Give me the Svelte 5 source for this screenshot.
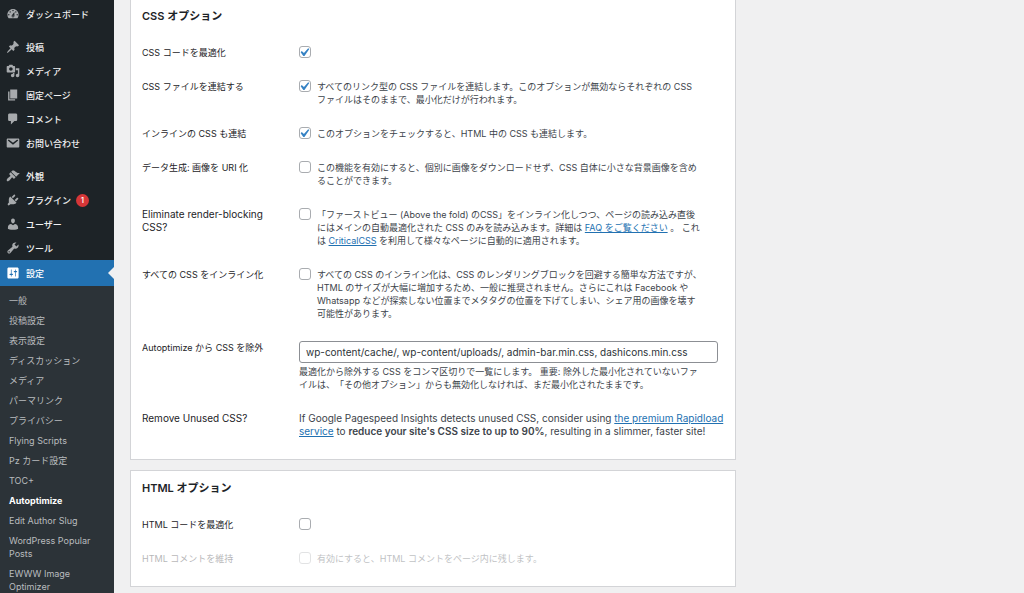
<script>
  const menuGroups = [
    [{ label: 'ダッシュボード', icon: 'dashboard' }],
    [
      { label: '投稿', icon: 'post' },
      { label: 'メディア', icon: 'media' },
      { label: '固定ページ', icon: 'page' },
      { label: 'コメント', icon: 'comment' },
      { label: 'お問い合わせ', icon: 'mail' }
    ],
    [
      { label: '外観', icon: 'appearance' },
      { label: 'プラグイン', icon: 'plugin', count: 1 },
      { label: 'ユーザー', icon: 'user' },
      { label: 'ツール', icon: 'tool' },
      { label: '設定', icon: 'settings', current: true }
    ]
  ];

  const submenu = [
    '一般',
    '投稿設定',
    '表示設定',
    'ディスカッション',
    'メディア',
    'パーマリンク',
    'プライバシー',
    'Flying Scripts',
    'Pz カード設定',
    'TOC+',
    'Autoptimize',
    'Edit Author Slug',
    'WordPress Popular Posts',
    'EWWW Image Optimizer'
  ];

  // 20x20 icon shapes
  const icons = {
    dashboard:
      'M3.76 16h12.48c1.1-1.37 1.76-3.11 1.76-5 0-4.42-3.58-8-8-8s-8 3.58-8 8c0 1.89.66 3.63 1.76 5zM10 4c.55 0 1 .45 1 1s-.45 1-1 1-1-.45-1-1 .45-1 1-1zM6 6c.55 0 1 .45 1 1s-.45 1-1 1-1-.45-1-1 .45-1 1-1zm8 0c.55 0 1 .45 1 1s-.45 1-1 1-1-.45-1-1 .45-1 1-1zm-5.37 5.55L12 7v6c0 1.1-.9 2-2 2s-2-.9-2-2c0-.57.24-1.08.63-1.45zM4 10c.55 0 1 .45 1 1s-.45 1-1 1-1-.45-1-1 .45-1 1-1zm12 0c.55 0 1 .45 1 1s-.45 1-1 1-1-.45-1-1 .45-1 1-1zm-5 3c0-.55-.45-1-1-1s-1 .45-1 1 .45 1 1 1 1-.45 1-1z',
    post: 'M10.44 3.02l1.82-1.82 6.36 6.35-1.83 1.82c-1.05-.68-2.48-.57-3.41.36l-.75.75c-.92.93-1.04 2.35-.35 3.41l-1.83 1.82-2.41-2.41-2.8 2.79c-.42.42-3.38 2.71-3.8 2.29s1.86-3.39 2.28-3.81l2.79-2.79L4.1 9.36l1.83-1.82c1.05.69 2.48.57 3.4-.36l.75-.75c.93-.92 1.05-2.35.36-3.41z',
    media:
      'M13 11V4c0-.55-.45-1-1-1h-1.67L9 1H5L3.67 3H2c-.55 0-1 .45-1 1v7c0 .55.45 1 1 1h10c.55 0 1-.45 1-1zM7 4.5c1.38 0 2.5 1.12 2.5 2.5S8.38 9.5 7 9.5 4.5 8.38 4.5 7 5.62 4.5 7 4.5zM14 6h5v10.5c0 1.38-1.12 2.5-2.5 2.5S14 17.88 14 16.5s1.12-2.5 2.5-2.5c.17 0 .34.02.5.05V9h-3V6zm-4 8.05V13h2v3.5c0 1.38-1.12 2.5-2.5 2.5S7 17.88 7 16.5 8.12 14 9.5 14c.17 0 .34.02.5.05z',
    page: 'M6 15V2h10v13H6zm-1 1h8v2H3V5h2v11z',
    comment:
      'M5 2h9c1.1 0 2 .9 2 2v7c0 1.1-.9 2-2 2h-2l-5 5v-5H5c-1.1 0-2-.9-2-2V4c0-1.1.9-2 2-2z',
    mail: 'M2.5 3.5h15c.8 0 1.5.7 1.5 1.5v10c0 .8-.7 1.5-1.5 1.5h-15c-.8 0-1.5-.7-1.5-1.5V5c0-.8.7-1.5 1.5-1.5zM2.6 6.3l7.4 6.2 7.4-6.2-1.3-1.4L10 9.6 3.9 4.9z',
    appearance:
      'M14.48 11.06L7.41 3.99l1.5-1.5c.5-.56 2.3-.47 3.51.32 1.21.8 1.43 1.28 2.91 2.1 1.18.64 2.45 1.26 4.45.85zm-.71.71L6.7 4.7 4.93 6.47c-.39.39-.39 1.02 0 1.41l1.06 1.06c.39.39.39 1.03 0 1.42-.6.6-1.43 1.11-2.21 1.69-.35.26-.7.53-1.01.84C1.43 14.23.4 16.08 1.4 17.07c.99 1 2.84-.03 4.18-1.36.31-.31.58-.66.85-1.02.57-.78 1.08-1.61 1.69-2.21.39-.39 1.02-.39 1.41 0l1.06 1.06c.39.39 1.02.39 1.41 0z',
    plugin:
      'M13.11 4.36L9.87 7.6 8 5.73l3.24-3.24c.35-.34 1.05-.2 1.56.32.52.51.66 1.21.31 1.55zm-8 1.77l.91-1.12 9.01 9.01-1.19.84c-.71.71-2.63 1.16-3.82 1.16H6.14L4.9 17.26c-.59.59-1.54.59-2.12 0-.59-.58-.59-1.53 0-2.12l1.24-1.24v-3.88c0-1.13.4-3.19 1.09-3.89zm7.26 3.97l3.24-3.24c.34-.35 1.04-.21 1.55.31.52.51.66 1.21.31 1.55l-3.24 3.25z',
    user: 'M10 9.25c-2.27 0-2.73-3.44-2.73-3.44C7 4.02 7.82 2 9.97 2c2.16 0 2.98 2.02 2.71 3.81 0 0-.41 3.44-2.68 3.44zm0 2.57L12.72 10c2.39 0 4.52 2.33 4.52 4.53v2.49s-3.65 1.13-7.24 1.13c-3.65 0-7.24-1.13-7.24-1.13v-2.49c0-2.25 1.94-4.48 4.47-4.48z',
    tool: 'M16.68 9.77c-1.34 1.34-3.3 1.67-4.95.99l-5.41 6.52c-.99.99-2.59.99-3.58 0s-.99-2.59 0-3.57l6.52-5.42c-.68-1.65-.35-3.61.99-4.95 1.28-1.28 3.12-1.62 4.72-1.06l-2.89 2.89 2.82 2.82 2.86-2.87c.53 1.58.18 3.39-1.08 4.65zM3.81 16.21c.4.39 1.04.39 1.43 0 .4-.4.4-1.04 0-1.43-.39-.4-1.03-.4-1.43 0-.39.39-.39 1.03 0 1.43z',
    settings:
      'M18 16V4c0-1.1-.9-2-2-2H4c-1.1 0-2 .9-2 2v12c0 1.1.9 2 2 2h12c1.1 0 2-.9 2-2zM8 11h1c.55 0 1 .45 1 1s-.45 1-1 1H8v1.5c0 .28-.22.5-.5.5s-.5-.22-.5-.5V13H6c-.55 0-1-.45-1-1s.45-1 1-1h1V5.5c0-.28.22-.5.5-.5s.5.22.5.5V11zm5-2h-1c-.55 0-1-.45-1-1s.45-1 1-1h1V5.5c0-.28.22-.5.5-.5s.5.22.5.5V7h1c.55 0 1 .45 1 1s-.45 1-1 1h-1v5.5c0 .28-.22.5-.5.5s-.5-.22-.5-.5V9z'
  };

  let optimizeCss = true;
  let aggregateCss = true;
  let inlineCss = true;
  let dataUris = false;
  let deferCss = false;
  let inlineAll = false;
  let optimizeHtml = false;
  let keepComments = false;
  let excluded = 'wp-content/cache/, wp-content/uploads/, admin-bar.min.css, dashicons.min.css';
</script>

<div class="admin">
  <nav class="sidebar" aria-label="メインメニュー">
    {#each menuGroups as group}
      <ul class="menu">
        {#each group as item}
          <li>
            <a href="#menu" class="item" class:current={item.current}>
              <svg viewBox="0 0 20 20" aria-hidden="true"><path d={icons[item.icon]} /></svg>
              <span>{item.label}</span>
              {#if item.count}
                <span class="count">{item.count}</span>
              {/if}
            </a>
          </li>
        {/each}
      </ul>
    {/each}
    <ul class="submenu">
      {#each submenu as label}
        <li><a href="#submenu" class:active={label === 'Autoptimize'}>{label}</a></li>
      {/each}
    </ul>
  </nav>

  <main>
    <section class="card">
      <h3>CSS オプション</h3>
      <table>
        <tbody>
          <tr>
            <th scope="row"><label for="css">CSS コードを最適化</label></th>
            <td><div class="option"><input id="css" type="checkbox" bind:checked={optimizeCss} /></div></td>
          </tr>
          <tr>
            <th scope="row">CSS ファイルを連結する</th>
            <td>
              <label class="option">
                <input type="checkbox" bind:checked={aggregateCss} />
                <span>すべてのリンク型の CSS ファイルを連結します。このオプションが無効ならそれぞれの CSS<br />ファイルはそのままで、最小化だけが行われます。</span>
              </label>
            </td>
          </tr>
          <tr>
            <th scope="row">インラインの CSS も連結</th>
            <td>
              <label class="option">
                <input type="checkbox" bind:checked={inlineCss} />
                <span>このオプションをチェックすると、HTML 中の CSS も連結します。</span>
              </label>
            </td>
          </tr>
          <tr>
            <th scope="row">データ生成: 画像を URI 化</th>
            <td>
              <label class="option">
                <input type="checkbox" bind:checked={dataUris} />
                <span>この機能を有効にすると、個別に画像をダウンロードせず、CSS 自体に小さな背景画像を含め<br />ることができます。</span>
              </label>
            </td>
          </tr>
          <tr>
            <th scope="row" class="english">Eliminate render-blocking CSS?</th>
            <td>
              <label class="option">
                <input type="checkbox" bind:checked={deferCss} />
                <span>「ファーストビュー (Above the fold) のCSS」をインライン化しつつ、ページの読み込み直後<br />にはメインの自動最適化された CSS のみを読み込みます。詳細は <a href="#faq">FAQ をご覧ください</a> 。 これ<br />は <a href="#criticalcss">CriticalCSS</a> を利用して様々なページに自動的に適用されます。</span>
              </label>
            </td>
          </tr>
          <tr>
            <th scope="row">すべての CSS をインライン化</th>
            <td>
              <label class="option">
                <input type="checkbox" bind:checked={inlineAll} />
                <span>すべての CSS のインライン化は、CSS のレンダリングブロックを回避する簡単な方法ですが、<br />HTML のサイズが大幅に増加するため、一般に推奨されません。さらにこれは Facebook や<br />Whatsapp などが探索しない位置までメタタグの位置を下げてしまい、シェア用の画像を壊す<br />可能性があります。</span>
              </label>
            </td>
          </tr>
          <tr>
            <th scope="row"><label for="excluded">Autoptimize から CSS を除外</label></th>
            <td>
              <input id="excluded" class="text" type="text" bind:value={excluded} />
              <p>最適化から除外する CSS をコンマ区切りで一覧にします。 重要: 除外した最小化されていないファ<br />イルは、「その他オプション」からも無効化しなければ、まだ最小化されたままです。</p>
            </td>
          </tr>
          <tr>
            <th scope="row" class="english">Remove Unused CSS?</th>
            <td>
              <p class="english">If Google Pagespeed Insights detects unused CSS, consider using <a href="#rapidload">the premium Rapidload<br />service</a> to <b>reduce your site's CSS size to up to 90%</b>, resulting in a slimmer, faster site!</p>
            </td>
          </tr>
        </tbody>
      </table>
    </section>

    <section class="card">
      <h3>HTML オプション</h3>
      <table>
        <tbody>
          <tr>
            <th scope="row"><label for="html">HTML コードを最適化</label></th>
            <td><div class="option"><input id="html" type="checkbox" bind:checked={optimizeHtml} /></div></td>
          </tr>
          <tr class="disabled">
            <th scope="row">HTML コメントを維持</th>
            <td>
              <label class="option">
                <input type="checkbox" bind:checked={keepComments} />
                <span>有効にすると、HTML コメントをページ内に残します。</span>
              </label>
            </td>
          </tr>
        </tbody>
      </table>
    </section>
  </main>
</div>

<style>
  :global(body) {
    background: #f0f0f1;
    overflow: hidden;
  }

  .admin {
    display: flex;
    height: 100vh;
    overflow: hidden;
    color: #3c434a;
    font-family: Inter, 'Noto Sans CJK JP', sans-serif;
    font-size: 9px;
    line-height: 13px;
    text-spacing-trim: space-all;
  }

  ul {
    list-style: none;
    margin: 0;
    padding: 0;
  }

  /* Sidebar */
  .sidebar {
    flex: none;
    width: 114px;
    padding-top: 2px;
    background: #1d2327;
  }

  .menu + .menu {
    margin-top: 9px;
  }

  .item {
    position: relative;
    display: flex;
    align-items: center;
    height: 24px;
    padding-left: 6px;
    color: #f0f0f1;
    font-weight: 500;
    text-decoration: none;
  }

  .item svg {
    width: 14px;
    height: 14px;
    margin-right: 6px;
    fill: #a7aaad;
    fill-rule: evenodd;
  }

  .item.current {
    height: 26px;
    background: #2271b1;
    color: #fff;
  }

  .item.current svg {
    fill: #fff;
  }

  .item.current::after {
    content: '';
    position: absolute;
    right: 0;
    top: 7px;
    border: 6px solid transparent;
    border-left: 0;
    border-right-color: #f0f0f1;
  }

  .count {
    width: 13px;
    margin-left: 5px;
    border-radius: 7px;
    background: #d63638;
    color: #fff;
    font-size: 8px;
    text-align: center;
  }

  .submenu {
    min-height: 100vh;
    padding-top: 5px;
    background: #2c3338;
  }

  .submenu a {
    display: block;
    padding: 3px 8px 4px 9px;
    color: #b9bcbf;
    text-decoration: none;
  }

  .submenu a.active {
    color: #fff;
    font-weight: 700;
  }

  /* Settings cards */
  main {
    flex: 1;
    padding: 0 16px;
    margin-top: -2px;
  }

  .card {
    box-sizing: border-box;
    max-width: 606px;
    margin-bottom: 10px;
    padding: 0 10px 10px 11px;
    border: 1px solid #d3d4d7;
    background: #fff;
  }

  h3 {
    margin: 0;
    padding: 10px 0 13px;
    color: #1d2327;
    font-size: 11px;
    line-height: 14px;
    font-weight: 600;
  }

  table {
    width: 100%;
    border-collapse: collapse;
    table-layout: fixed;
  }

  th,
  td {
    padding: 10px 7px 11px 0;
    text-align: left;
    vertical-align: top;
  }

  th {
    width: 137px;
    padding-right: 20px;
    color: #1d2327;
    font-weight: 400;
  }

  th label {
    display: block;
  }

  .english {
    font-size: 10px;
  }

  .option {
    display: flex;
    align-items: flex-start;
    gap: 6px;
    min-height: 13px;
    white-space: nowrap;
  }

  input[type='checkbox'] {
    appearance: none;
    flex: none;
    box-sizing: border-box;
    width: 12px;
    height: 12px;
    margin: 0;
    border: 1px solid #a9acb0;
    border-radius: 3px;
    background: #fff;
  }

  input[type='checkbox']:checked {
    background-image: url("data:image/svg+xml,%3Csvg xmlns='http://www.w3.org/2000/svg' viewBox='5 3.5 12 12'%3E%3Cpath d='M14.83 4.89l1.34.94-5.81 8.38H9.02L5.78 9.67l1.34-1.25 2.57 2.4z' fill='%233582c4'/%3E%3C/svg%3E");
  }

  .text {
    display: block;
    box-sizing: border-box;
    width: 100%;
    height: 22px;
    margin: 0 0 2px;
    padding: 0 6px;
    border: 1px solid #8c8f94;
    border-radius: 3px;
    background: #fff;
    color: #2c3338;
    font-family: inherit;
    font-size: 10px;
  }

  p {
    margin: 0;
    white-space: nowrap;
  }

  td a {
    color: #2271b1;
  }

  b {
    font-weight: 600;
  }

  .disabled {
    opacity: 0.33;
  }
</style>
